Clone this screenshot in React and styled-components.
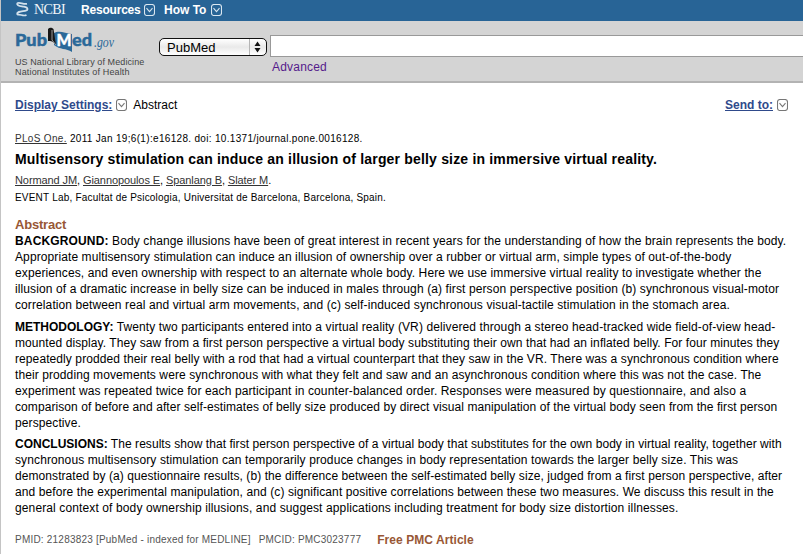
import React from "react";
import styled, { createGlobalStyle } from "styled-components";

const background = [
  { label: "BACKGROUND:", labelSpacing: "0.15px", spacing: "0.1px", text: " Body change illusions have been of great interest in recent years for the understanding of how the brain represents the body." },
  { spacing: "0.104px", text: "Appropriate multisensory stimulation can induce an illusion of ownership over a rubber or virtual arm, simple types of out-of-the-body" },
  { spacing: "0.104px", text: "experiences, and even ownership with respect to an alternate whole body. Here we use immersive virtual reality to investigate whether the" },
  { spacing: "0.11px", text: "illusion of a dramatic increase in belly size can be induced in males through (a) first person perspective position (b) synchronous visual-motor" },
  { spacing: "0.1px", text: "correlation between real and virtual arm movements, and (c) self-induced synchronous visual-tactile stimulation in the stomach area." },
];

const methodology = [
  { label: "METHODOLOGY:", spacing: "0.105px", text: " Twenty two participants entered into a virtual reality (VR) delivered through a stereo head-tracked wide field-of-view head-" },
  { spacing: "0.082px", text: "mounted display. They saw from a first person perspective a virtual body substituting their own that had an inflated belly. For four minutes they" },
  { spacing: "0.09px", text: "repeatedly prodded their real belly with a rod that had a virtual counterpart that they saw in the VR. There was a synchronous condition where" },
  { spacing: "0.092px", text: "their prodding movements were synchronous with what they felt and saw and an asynchronous condition where this was not the case. The" },
  { spacing: "0.114px", text: "experiment was repeated twice for each participant in counter-balanced order. Responses were measured by questionnaire, and also a" },
  { spacing: "0.072px", text: "comparison of before and after self-estimates of belly size produced by direct visual manipulation of the virtual body seen from the first person" },
  { spacing: "0.1px", text: "perspective." },
];

const conclusions = [
  { label: "CONCLUSIONS:", spacing: "0.056px", text: " The results show that first person perspective of a virtual body that substitutes for the own body in virtual reality, together with" },
  { spacing: "0.114px", text: "synchronous multisensory stimulation can temporarily produce changes in body representation towards the larger belly size. This was" },
  { spacing: "0.075px", text: "demonstrated by (a) questionnaire results, (b) the difference between the self-estimated belly size, judged from a first person perspective, after" },
  { spacing: "0.095px", text: "and before the experimental manipulation, and (c) significant positive correlations between these two measures. We discuss this result in the" },
  { spacing: "0.12px", text: "general context of body ownership illusions, and suggest applications including treatment for body size distortion illnesses." },
];

const authors = ["Normand JM", "Giannopoulos E", "Spanlang B", "Slater M"];

function Toggle({ color }) {
  return (
    <ToggleIcon viewBox="0 0 11 12" stroke={color}>
      <rect x="0.5" y="0.5" width="10" height="11" rx="2.5" />
      <path d="M2.5 4.2 L5.5 7.6 L8.5 4.2" />
    </ToggleIcon>
  );
}

function NcbiMark() {
  return (
    <Helix viewBox="0 0 14 17">
      <path d="M2 2.2 C2 5.5 6 5 9 5.6 C13.5 6.5 13.5 9.2 10 9.8 C6 10.4 2 10.2 2 13.5" />
      <path d="M2 2.2 C5 1 8 3.5 12 2.8" />
      <path d="M2 13.8 C5 12.5 8 15.8 11.5 14" />
    </Helix>
  );
}

function PubMedLogo() {
  return (
    <Logo viewBox="0 0 102 30">
      <path d="M39 6 C44 3 50 6 57 7 L57 25 C51 21 45 23 39 18 Z" fill="#2b6999" />
      <path d="M33 2 C35 0 37 1 38.5 2 L41 18 C38 14 36 14 33 14 Z" fill="#171717" />
      <path d="M37 3 V13 L41 18" stroke="#aaa" strokeWidth="0.9" fill="none" />
      <text x="0" y="19" className="word" textLength="32" lengthAdjust="spacingAndGlyphs">Pub</text>
      <text x="41.5" y="19" className="letter" textLength="15" lengthAdjust="spacingAndGlyphs">M</text>
      <text x="57" y="19" className="word" textLength="20" lengthAdjust="spacingAndGlyphs">ed</text>
      <text x="79" y="20" className="gov" textLength="20" lengthAdjust="spacingAndGlyphs">.gov</text>
    </Logo>
  );
}

function Paragraph({ lines, gap }) {
  return (
    <Section $gap={gap}>
      {lines.map((line) => (
        <Line key={line.text} $spacing={line.spacing}>
          {line.label && <Label $spacing={line.labelSpacing}>{line.label}</Label>}
          {line.text}
        </Line>
      ))}
    </Section>
  );
}

function App() {
  return (
    <Page>
      <GlobalStyle />
      <TopBar>
        <NcbiMark />
        <Brand>NCBI</Brand>
        <MenuItem $width="83px" $gap="3px" $spacing="-0.2px">Resources <Toggle color="#d9e6f0" /></MenuItem>
        <MenuItem $gap="5px">How To <Toggle color="#d9e6f0" /></MenuItem>
      </TopBar>
      <Header>
        <Identity>
          <PubMedLogo />
          <Agency $spacing="0.09px">US National Library of Medicine</Agency>
          <Agency $spacing="0.16px">National Institutes of Health</Agency>
        </Identity>
        <Database>
          PubMed
          <Arrows viewBox="0 0 17 16">
            <path d="M.5 0 V16" stroke="#b5b5b5" />
            <path d="M5.5 7 L8.5 2.5 L11.5 7 Z M5.5 9 H11.5 L8.5 13.5 Z" fill="#111" />
          </Arrows>
        </Database>
        <Search>
          <Field />
          <Advanced>Advanced</Advanced>
        </Search>
      </Header>
      <Content>
        <Settings>
          <SettingsLink>Display Settings:</SettingsLink>
          <Toggle color="#777" />
          <Format>Abstract</Format>
          <SettingsLink>Send to:</SettingsLink>
          <Toggle color="#777" />
        </Settings>
        <Citation>
          <Link>PLoS One.</Link> 2011 Jan 19;6(1):e16128. doi: 10.1371/journal.pone.0016128.
        </Citation>
        <Title>Multisensory stimulation can induce an illusion of larger belly size in immersive virtual reality.</Title>
        <Authors>
          {authors.map((name, i) => (
            <React.Fragment key={name}>
              <Link>{name}</Link>
              {i < authors.length - 1 ? ", " : "."}
            </React.Fragment>
          ))}
        </Authors>
        <Affiliation>EVENT Lab, Facultat de Psicologia, Universitat de Barcelona, Barcelona, Spain.</Affiliation>
        <Heading>Abstract</Heading>
        <Paragraph lines={background} gap="6px" />
        <Paragraph lines={methodology} gap="5px" />
        <Paragraph lines={conclusions} gap="7px" />
        <Ids>
          <span>PMID: 21283823 [PubMed - indexed for MEDLINE]</span>
          <span>PMCID: PMC3023777</span>
          <Free>Free PMC Article</Free>
        </Ids>
      </Content>
    </Page>
  );
}

const GlobalStyle = createGlobalStyle`
  body {
    margin: 0;
    overflow: hidden;
  }
  * {
    box-sizing: border-box;
  }
`;

const Page = styled.div`
  height: 554px;
  overflow: hidden;
  border-left: 1px solid #c4c4c4;
  background: #fff;
  color: #000;
  font-family: "Liberation Sans", Arial, sans-serif;
  font-size: 12px;
  white-space: nowrap;
`;

const TopBar = styled.nav`
  display: flex;
  align-items: center;
  height: 21px;
  padding: 0 0 2px 14px;
  background: #286496;
  color: #fff;
`;

const Helix = styled.svg`
  width: 14px;
  height: 17px;
  fill: none;
  stroke: #d3e1ec;
  stroke-width: 1.7;
`;

const Brand = styled.span`
  width: 47px;
  padding-left: 5px;
  color: #f2f7fa;
  font-family: "Liberation Serif", serif;
  font-size: 14px;
  letter-spacing: -0.6px;
`;

const MenuItem = styled.span`
  display: flex;
  align-items: center;
  gap: ${(props) => props.$gap};
  width: ${(props) => props.$width || "auto"};
  padding-left: 5px;
  font-weight: bold;
  letter-spacing: ${(props) => props.$spacing || "0"};
`;

const ToggleIcon = styled.svg`
  flex: none;
  width: 11px;
  height: 12px;
  fill: none;
  stroke-width: 1.1;
`;

const Header = styled.header`
  display: flex;
  height: 62px;
  padding-left: 14px;
  border-bottom: 2px solid #b3b3b3;
  background: #d4d4d4;
`;

const Identity = styled.div`
  width: 144px;
  padding-top: 6px;
`;

const Logo = styled.svg`
  display: block;
  width: 102px;
  height: 30px;

  .word {
    fill: #2b6999;
    stroke: #2b6999;
    stroke-width: 0.4;
    font: 900 16px Lato, sans-serif;
  }
  .letter {
    fill: #fff;
    stroke: #fff;
    stroke-width: 0.4;
    font: 900 17px Lato, sans-serif;
  }
  .gov {
    fill: #2b6999;
    font: italic 15px "Liberation Serif", serif;
  }
`;

const Agency = styled.div`
  color: #444;
  font-size: 9px;
  line-height: 10px;
  letter-spacing: ${(props) => props.$spacing};
`;

const Database = styled.div`
  display: flex;
  align-items: center;
  justify-content: space-between;
  width: 108px;
  height: 18px;
  margin-top: 17px;
  padding-left: 7px;
  border: 1.5px solid #111;
  border-radius: 5px;
  background: linear-gradient(#fff, #e9e9e9 50%, #fff);
  font-size: 13px;
`;

const Arrows = styled.svg`
  width: 17px;
  height: 16px;
  fill: none;
`;

const Search = styled.div`
  flex: 1;
  padding: 14px 0 0 3px;
`;

const Field = styled.div`
  height: 22px;
  border: 1px solid #999;
  border-right: 0;
  background: #fff;
`;

const Advanced = styled.div`
  padding: 3px 0 0 2px;
  color: #551a8b;
  line-height: 15px;
  letter-spacing: 0.2px;
`;

const Content = styled.main`
  padding-left: 14px;
`;

const Settings = styled.div`
  display: flex;
  align-items: center;
  gap: 4px;
  height: 16px;
  margin-top: 14px;
  padding-right: 15px;
`;

const SettingsLink = styled.span`
  color: #2f4a8b;
  font-weight: bold;
  text-decoration: underline;
`;

const Format = styled.span`
  flex: 1;
  padding-left: 2px;
`;

const Citation = styled.div`
  margin-top: 19px;
  font-size: 10px;
  line-height: 14px;
  letter-spacing: 0.32px;
`;

const Link = styled.span`
  color: #333;
  text-decoration: underline;
`;

const Title = styled.h1`
  margin: 4px 0 0;
  font-size: 14px;
  line-height: 18px;
  letter-spacing: 0.18px;
`;

const Authors = styled.div`
  margin-top: 5px;
  font-size: 11px;
  line-height: 15px;
  letter-spacing: -0.09px;
`;

const Affiliation = styled.div`
  margin-top: 3px;
  font-size: 10px;
  line-height: 14px;
  letter-spacing: 0.205px;
`;

const Heading = styled.h2`
  margin: 12px 0 0;
  color: #985735;
  font-size: 13px;
  line-height: 16px;
  letter-spacing: -0.2px;
`;

const Section = styled.div`
  margin-bottom: ${(props) => props.$gap};
`;

const Line = styled.div`
  height: 16px;
  line-height: 16px;
  letter-spacing: ${(props) => props.$spacing};
`;

const Label = styled.b`
  letter-spacing: ${(props) => props.$spacing || "0"};
`;

const Ids = styled.div`
  display: flex;
  align-items: center;
  gap: 8px;
  margin-top: 16px;
  color: #555;
  font-size: 10px;
  line-height: 16px;
  letter-spacing: 0.21px;
`;

const Free = styled.b`
  margin-left: 8px;
  color: #985735;
  font-size: 12px;
  letter-spacing: 0.06px;
`;

export default App;
